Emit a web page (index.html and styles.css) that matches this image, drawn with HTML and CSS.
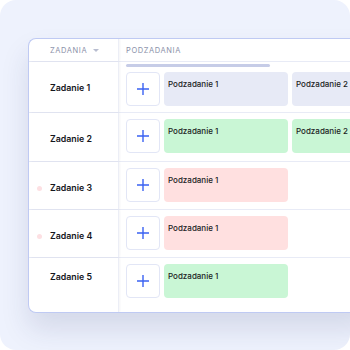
FILE: index.html
```html
<!DOCTYPE html>
<html lang="pl">
<head>
  <meta charset="UTF-8" />
  <meta name="viewport" content="width=device-width, initial-scale=1.0" />
  <title>Zadania</title>
  <link rel="stylesheet" href="styles.css">
</head>
<body>
  <div class="frame">
    <div class="board">
      <div class="row head">
        <div class="cell task">
          <span class="dot none"></span>
          <span class="head-label">ZADANIA</span>
          <span class="caret"></span>
        </div>
        <div class="cell subs">
          <span class="head-label">PODZADANIA</span>
        </div>
      </div>

      <div class="row r1">
        <div class="cell task">
          <span class="dot none"></span>
          <span class="name">Zadanie 1</span>
        </div>
        <div class="cell subs">
          <div class="scrollbar"></div>
          <div class="items">
            <button class="add">
              <svg width="14" height="14" viewBox="0 0 14 14"><path d="M7 1v12M1 7h12" stroke="#3a62f2" stroke-width="1.4" fill="none"/></svg>
            </button>
            <div class="sub grey">Podzadanie 1</div>
            <div class="sub grey">Podzadanie 2</div>
          </div>
        </div>
      </div>

      <div class="row r2">
        <div class="cell task">
          <span class="dot none"></span>
          <span class="name">Zadanie 2</span>
        </div>
        <div class="cell subs">
          <div class="items">
            <button class="add">
              <svg width="14" height="14" viewBox="0 0 14 14"><path d="M7 1v12M1 7h12" stroke="#3a62f2" stroke-width="1.4" fill="none"/></svg>
            </button>
            <div class="sub green">Podzadanie 1</div>
            <div class="sub green">Podzadanie 2</div>
          </div>
        </div>
      </div>

      <div class="row r3">
        <div class="cell task">
          <span class="dot"></span>
          <span class="name">Zadanie 3</span>
        </div>
        <div class="cell subs">
          <div class="items">
            <button class="add">
              <svg width="14" height="14" viewBox="0 0 14 14"><path d="M7 1v12M1 7h12" stroke="#3a62f2" stroke-width="1.4" fill="none"/></svg>
            </button>
            <div class="sub red">Podzadanie 1</div>
          </div>
        </div>
      </div>

      <div class="row r4">
        <div class="cell task">
          <span class="dot"></span>
          <span class="name">Zadanie 4</span>
        </div>
        <div class="cell subs">
          <div class="items">
            <button class="add">
              <svg width="14" height="14" viewBox="0 0 14 14"><path d="M7 1v12M1 7h12" stroke="#3a62f2" stroke-width="1.4" fill="none"/></svg>
            </button>
            <div class="sub red">Podzadanie 1</div>
          </div>
        </div>
      </div>

      <div class="row r5">
        <div class="cell task">
          <span class="dot none"></span>
          <span class="name">Zadanie 5</span>
        </div>
        <div class="cell subs">
          <div class="items">
            <button class="add">
              <svg width="14" height="14" viewBox="0 0 14 14"><path d="M7 1v12M1 7h12" stroke="#3a62f2" stroke-width="1.4" fill="none"/></svg>
            </button>
            <div class="sub green">Podzadanie 1</div>
          </div>
        </div>
      </div>
    </div>
  </div>
</body>
</html>
```

FILE: styles.css
```css
body {
  margin: 0;
  padding: 0;
  background-color: #ffffff;
  font-family: "Inter", "Noto Sans", sans-serif;
}

.frame {
  width: 350px;
  height: 350px;
  box-sizing: border-box;
  background-color: #eef2fd;
  border-radius: 16px;
  padding: 38px 0 0 28px;
  overflow: hidden;
}

.board {
  width: 340px;
  background-color: #ffffff;
  border: 1px solid #bfcaf3;
  border-right: none;
  border-radius: 8px 0 0 8px;
  box-shadow: 0 16px 28px rgba(40, 50, 100, 0.13);
  overflow: hidden;
}

.row {
  display: grid;
  grid-template-columns: 90px 1fr;
  border-bottom: 1px solid #e8ebf6;
  box-sizing: border-box;
}

.row.r5 {
  border-bottom: none;
}

.head { height: 23px; }
.r1 { height: 51px; }
.r2 { height: 49px; }
.r3 { height: 48px; }
.r4 { height: 48px; }
.r5 { height: 54px; }

.cell.task {
  display: flex;
  align-items: flex-start;
  gap: 8px;
  padding: 20px 0 0 8px;
  border-right: 1px solid #eceef6;
  box-shadow: 1px 0 2px rgba(30, 40, 80, 0.05);
}

.r5 .cell.task {
  padding-top: 13px;
}

.head .cell.task,
.head .cell.subs {
  align-items: center;
  padding-top: 1px;
}

.cell.subs {
  display: flex;
  flex-direction: column;
  padding: 6px 0 0 7px;
  overflow: hidden;
}

.r1 .cell.subs {
  padding-top: 2px;
}

.head .cell.subs {
  flex-direction: row;
  padding-left: 7px;
}

.head-label {
  font-size: 7.5px;
  letter-spacing: 0.6px;
  color: #8b91a9;
}

.caret {
  width: 0;
  height: 0;
  margin-left: -2px;
  border-left: 3px solid transparent;
  border-right: 3px solid transparent;
  border-top: 3px solid #b8bdd0;
}

.dot {
  width: 5px;
  height: 5px;
  margin-top: 4px;
  border-radius: 50%;
  background-color: #fde0e3;
  flex-shrink: 0;
}

.dot.none {
  visibility: hidden;
}

.name {
  font-size: 8.8px;
  line-height: 12px;
  font-weight: 600;
  color: #15161c;
}

.scrollbar {
  width: 144px;
  height: 3px;
  border-radius: 2px;
  background-color: #c6cce7;
  margin-bottom: 5px;
}

.items {
  display: flex;
  gap: 4px;
}

.add {
  width: 34px;
  height: 34px;
  flex-shrink: 0;
  display: flex;
  align-items: center;
  justify-content: center;
  padding: 0;
  background-color: #ffffff;
  border: 1px solid #e2e6f6;
  border-radius: 4px;
  cursor: pointer;
}

.sub {
  width: 124px;
  height: 34px;
  flex-shrink: 0;
  box-sizing: border-box;
  padding: 7px 4px;
  border-radius: 4px;
  font-size: 8px;
  font-weight: 500;
  color: #1c1d24;
}

.sub.grey {
  background-color: #e7eaf6;
}

.sub.green {
  background-color: #c9f6d5;
}

.sub.red {
  background-color: #ffe0e0;
}
```
